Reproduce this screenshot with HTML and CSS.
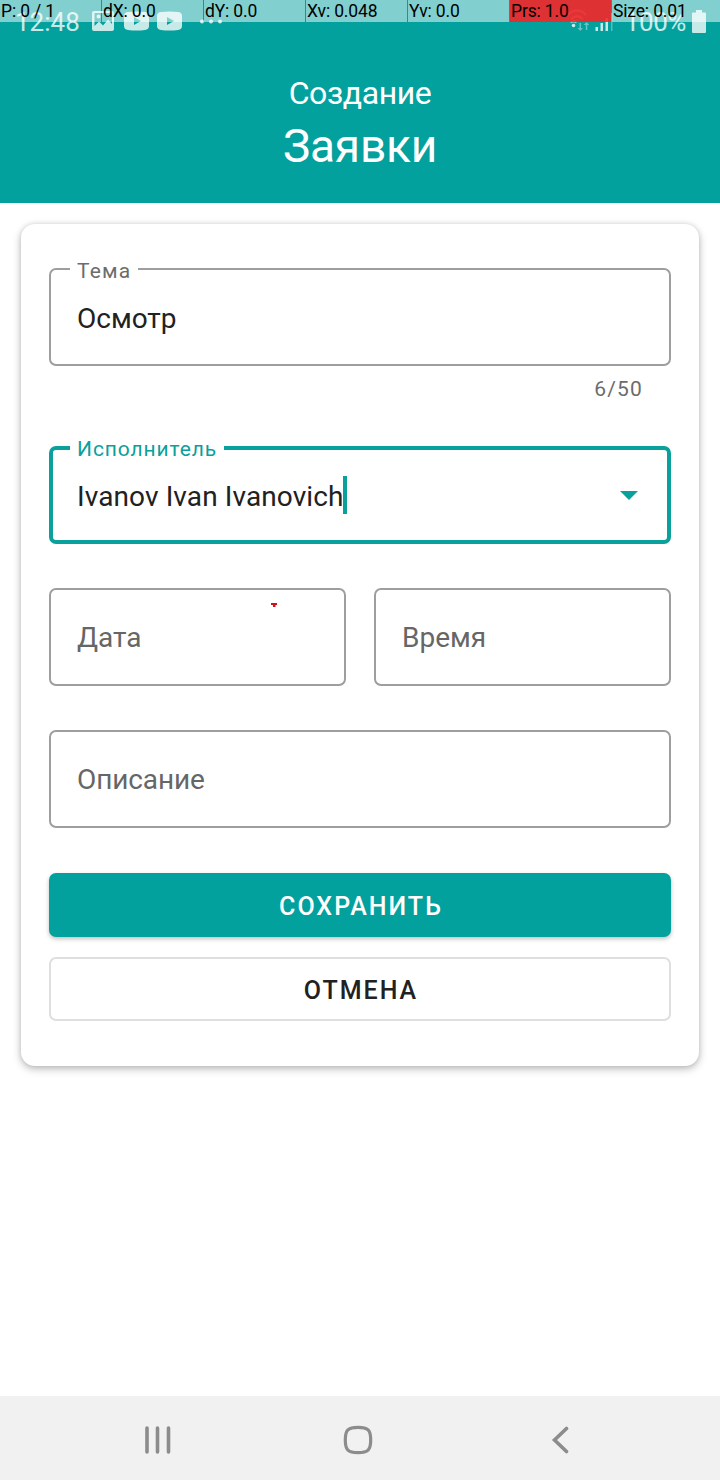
FILE: index.html
```
<!DOCTYPE html>
<html lang="ru">
<head>
<meta charset="utf-8">
<title>Создание заявки</title>
<link rel="stylesheet" href="styles.css">
</head>
<body>
<div class="screen">
  <div class="pointer-bar">
    <span>P: 0 / 1</span><span>dX: 0.0</span><span>dY: 0.0</span><span>Xv: 0.048</span><span>Yv: 0.0</span><span class="pressure">Prs: 1.0</span><span>Size: 0.01</span>
  </div>
  <header class="header">
    <div class="status">
      <span class="clock">12:48</span>
      <svg class="notifications" width="134" height="24" viewBox="0 0 134 24">
        <path fill-rule="evenodd" d="M2 2h18q2 0 2 2v16q0 2-2 2H2q-2 0-2-2V4q0-2 2-2zM2.500 4v13l4.500-4.500 4 4 5-6 4 4.500V4zM6.500 5.500a2 2 0 1 1 0 4 2 2 0 0 1 0-4z"/>
        <path fill-rule="evenodd" d="M36 3Q44.500 2 53 3Q57 3.300 57 7V17Q57 20.500 53 21Q44.500 22 36 21Q32 20.500 32 17V7Q32 3.300 36 3zM42 8v8l7-4z"/>
        <path fill-rule="evenodd" d="M69 3Q77.500 2 86 3Q90 3.300 90 7V17Q90 20.500 86 21Q77.500 22 69 21Q65 20.500 65 17V7Q65 3.300 69 3zM75 8v8l7-4z"/>
        <circle cx="110" cy="12.500" r="2"/><circle cx="119" cy="12.500" r="2"/><circle cx="128" cy="12.500" r="2"/>
      </svg>
      <svg class="signal" width="48" height="26" viewBox="0 0 48 26">
        <g fill="none" stroke="#fff" stroke-width="2.200" opacity=".6"><path d="M1 9Q10 0 19 9M4 13Q10 7 16 13"/><path d="M3.500 16.500Q6.500 14 9.500 16.500"/></g>
        <circle cx="6.500" cy="19.500" r="1.800"/>
        <path opacity=".5" d="M12.500 17H14v5h2l-2.700 3-2.800-3h2zM19.500 16l2.800 3h-2v5h-1.500v-5h-2z"/>
        <path d="M28.500 21H31v4h-2.500zM33.500 17H36v8h-2.500zM38.500 12H41v13h-2.500z"/><path opacity=".4" d="M44 7h1.500v18H44z"/>
      </svg>
      <span class="percent">100%</span>
      <svg class="battery" width="14" height="23" viewBox="0 0 14 23"><path d="M4 0h6v2.500h3q1 0 1 1V22q0 1-1 1H1q-1 0-1-1V3.500q0-1 1-1h3z"/></svg>
    </div>
    <div class="kicker">Создание</div>
    <h1 class="title">Заявки</h1>
  </header>
  <main class="main">
    <form class="card">
      <div class="field">
        <span class="label label-theme">Тема</span>
        <span class="value theme-value">Осмотр</span>
      </div>
      <div class="counter"><span>6/50</span></div>
      <div class="field focused">
        <span class="label label-person">Исполнитель</span>
        <span class="value person">Ivanov Ivan Ivanovich</span><i class="caret"></i>
        <svg class="arrow" width="18" height="9" viewBox="0 0 18 9"><path d="M0 0h18L9 9z"/></svg>
      </div>
      <div class="row">
        <div class="field">
          <span class="value hint">Дата</span>
          <svg class="touch" width="6" height="4" viewBox="0 0 6 4"><path d="M0 0h6v2H4.500v2H2V2H0z"/></svg>
        </div>
        <div class="field"><span class="value hint">Время</span></div>
      </div>
      <div class="field"><span class="value hint desc">Описание</span></div>
      <button type="button" class="btn save"><span>СОХРАНИТЬ</span></button>
      <button type="button" class="btn cancel"><span>ОТМЕНА</span></button>
    </form>
  </main>
  <nav class="nav">
    <svg width="28" height="28" viewBox="0 0 28 28"><path d="M3 2v24M13.500 2v24M24.500 2v24"/></svg>
    <svg class="home" width="30" height="30" viewBox="0 0 30 30"><path d="M15 2.300C25 2.300 27.700 5 27.700 15S25 27.700 15 27.700 2.300 25 2.300 15 5 2.300 15 2.300z"/></svg>
    <svg width="18" height="28" viewBox="0 0 18 28"><path d="M15.500 2.500L3.500 14l12 11.500"/></svg>
  </nav>
</div>
</body>
</html>
```
FILE: styles.css
```
* { box-sizing: border-box; }
body { margin: 0; background: #fff; font-family: Roboto, "Noto Sans", sans-serif; }
.screen { position: relative; display: flex; flex-direction: column; width: 720px; height: 1480px; overflow: hidden; }
.pointer-bar { position: absolute; top: 0; left: 0; z-index: 1; display: flex; gap: 1px; width: 720px; height: 22px; overflow: hidden; }
.pointer-bar span { flex: 0 0 101px; padding-left: 1px; background: rgba(255, 255, 255, .5); color: #000; font-size: 17.5px; line-height: 22px; letter-spacing: -.15px; white-space: nowrap; }
.pointer-bar span:last-child { flex-basis: 110px; }
.pointer-bar .pressure { background: rgba(255, 32, 36, .87); }
.header { height: 203px; background: #03a19e; color: #fff; text-align: center; }
.status { display: flex; height: 44px; align-items: center; padding: 0 14px 0 15px; opacity: .78; }
.status svg { flex: none; fill: #fff; }
.clock { width: 65px; font-size: 26px; line-height: 44px; text-align: left; }
.notifications { margin: -2px 0 0 12px; }
.signal { margin: -6px 0 0 auto; }
.percent { margin-left: 10px; font-size: 26px; letter-spacing: -.4px; }
.battery { margin: -2px 0 0 6px; }
.kicker { margin-top: 29px; font-size: 32px; line-height: 40px; letter-spacing: -.4px; }
.title { margin: 6px 0 0; font-size: 46px; font-weight: 400; line-height: 54px; letter-spacing: -.2px; }
.main { flex: 1; padding: 21px; }
.card { height: 842px; padding: 44px 28px; border-radius: 14px; background: #fff; box-shadow: 0 3px 8px rgba(0, 0, 0, .26), 0 0 5px rgba(0, 0, 0, .1); }
.field { position: relative; display: flex; align-items: center; height: 98px; padding: 0 26px; border: 2px solid #9e9e9e; border-radius: 7px; }
.focused { padding: 0 24px; border: 4px solid #0aa09c; }
.label { position: absolute; left: 19px; top: -13px; padding: 0 7px; background: #fff; color: #6c6c6c; font-size: 21px; line-height: 28px; letter-spacing: 1.15px; white-space: nowrap; }
.focused .label { left: 17px; top: -15px; color: #0aa09c; letter-spacing: .9px; }
.label-theme { width: 68px; }
.label-person { width: 154px; }
.value { color: #212121; font-size: 28px; line-height: 38px; white-space: nowrap; padding-top: 2px; }
.theme-value { padding-top: 4px; }
.person { padding-top: 4px; letter-spacing: .1px; }
.hint { color: #666; }
.desc { letter-spacing: -.1px; }
.caret { width: 4px; height: 38px; margin-left: -1px; background: #0aa09c; }
.arrow { margin-left: auto; margin-right: 5px; fill: #0aa09c; }
.counter { height: 80px; padding: 9px 28px 0; text-align: right; color: #6c6c6c; font-size: 21px; line-height: 28px; letter-spacing: 1.2px; }
.row { display: grid; grid-template-columns: 297px 297px; gap: 28px; margin: 44px 0; }
.touch { position: absolute; left: 220px; top: 13px; fill: #c8141b; }
.btn { display: flex; align-items: center; justify-content: center; width: 100%; height: 64px; padding: 4px 0 0 2px; border: 0; border-radius: 7px; font: 500 25px/30px Roboto, sans-serif; letter-spacing: 2px; }
.save { margin-top: 45px; background: #03a19e; color: #fff; box-shadow: 0 2px 4px rgba(0, 0, 0, .25); }
.cancel { margin-top: 20px; border: 2px solid #dfdfdf; background: #fff; color: #212121; }
.nav { display: flex; align-items: center; height: 84px; padding: 3px 151px 0 144px; justify-content: space-between; background: #f1f1f1; }
.nav svg { fill: none; stroke: #8c8c8c; stroke-width: 3.6; stroke-linecap: round; }
.nav .home { margin-right: 7px; stroke-width: 3.2; }
```
